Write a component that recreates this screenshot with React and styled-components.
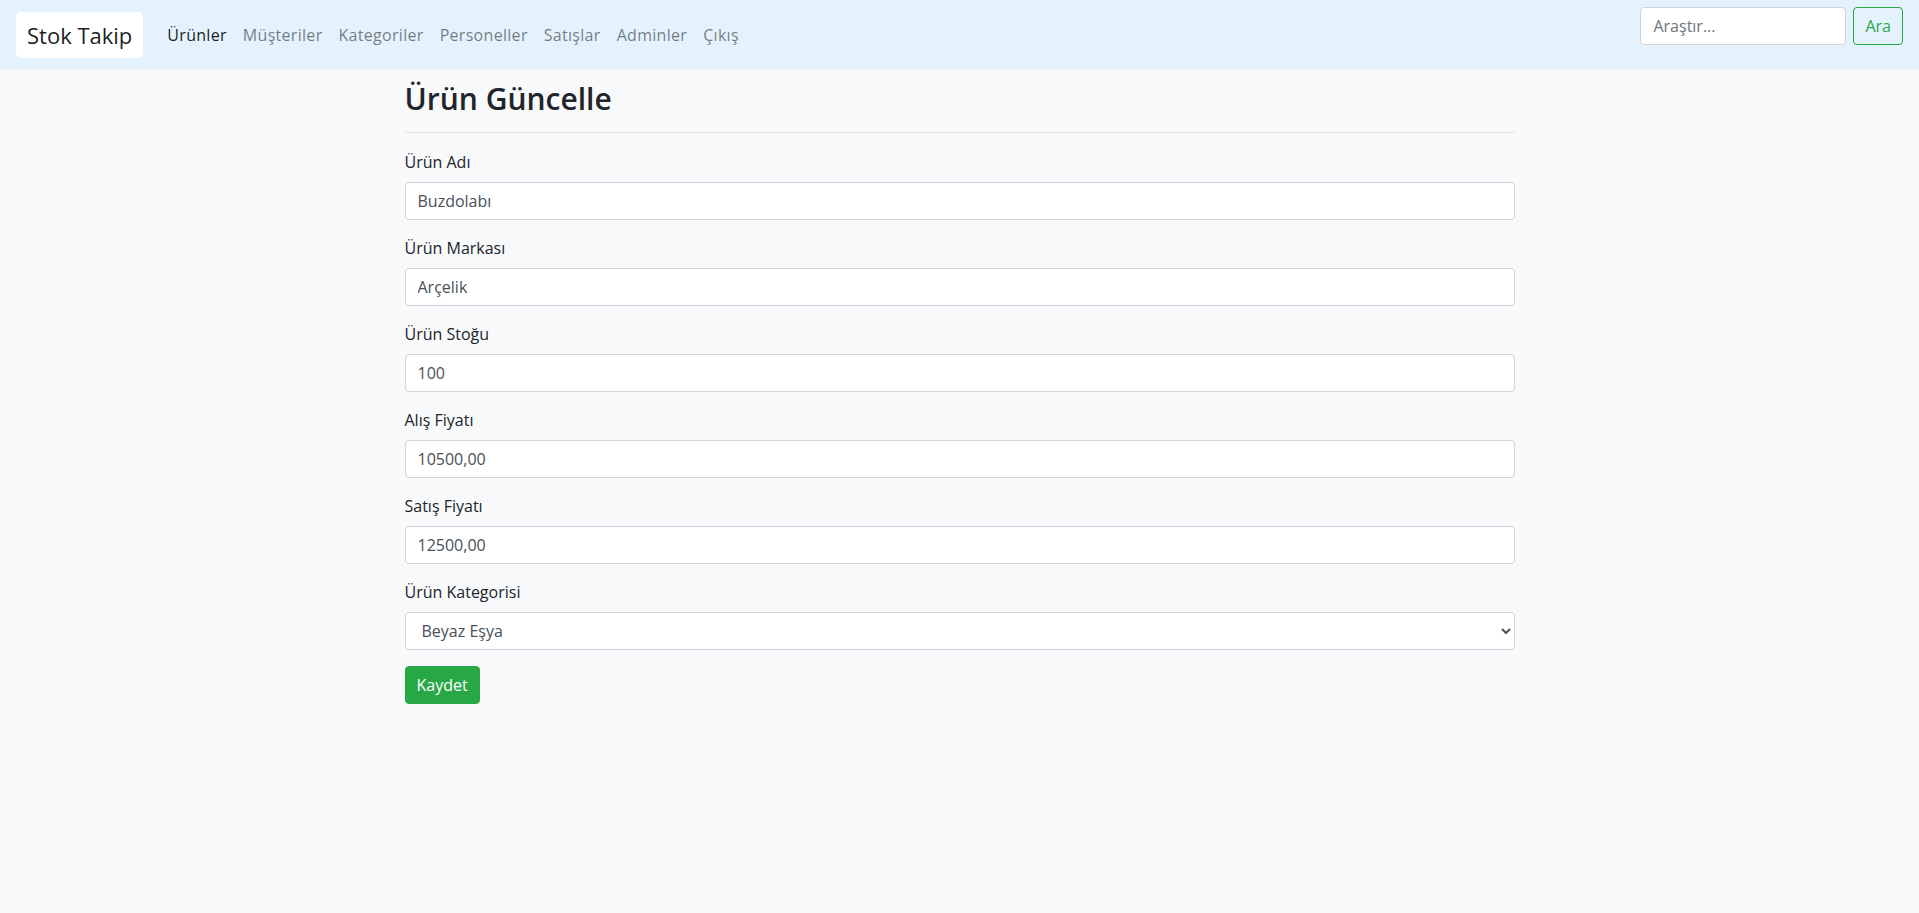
import styled, { createGlobalStyle } from "styled-components";

const GlobalStyle = createGlobalStyle`
  html, body {
    margin: 0;
    padding: 0;
    background: #f8f9fa;
    font-family: "Open Sans", "Noto Sans", "Liberation Sans", sans-serif;
    font-size: 16px;
    line-height: 1.5;
    color: #212529;
  }
  * {
    box-sizing: border-box;
  }
`;

const Page = styled.div`
  min-height: 913px;
  background: #f8f9fa;
`;

const Navbar = styled.nav`
  display: flex;
  align-items: center;
  height: 69px;
  padding: 0 16px;
  background-color: #e3f2fd;
`;

const Brand = styled.a`
  display: block;
  margin-right: 16px;
  padding: 6px 11px;
  font-size: 22px;
  line-height: 34px;
  color: rgba(0, 0, 0, 0.9);
  background: #fff;
  border-radius: 5px;
  text-decoration: none;
  white-space: nowrap;
`;

const NavList = styled.ul`
  display: flex;
  list-style: none;
  margin: 0;
  padding: 0;
  flex: 1;
`;

const NavLink = styled.a`
  display: block;
  padding: 8px;
  letter-spacing: 0.3px;
  color: ${(p) => (p.$active ? "rgba(0, 0, 0, 0.9)" : "rgba(0, 0, 0, 0.5)")};
  text-decoration: none;
  white-space: nowrap;
`;

const SearchForm = styled.form`
  display: flex;
  align-self: flex-start;
  margin-top: 7px;
`;

const SearchInput = styled.input`
  width: 206px;
  height: 38px;
  margin-right: 7px;
  padding: 6px 12px;
  font: inherit;
  color: #495057;
  background: #fff;
  border: 1px solid #ced4da;
  border-radius: 4px;
  outline: none;

  &::placeholder {
    color: #6c757d;
  }
`;

const OutlineButton = styled.button`
  height: 38px;
  padding: 6px 11px;
  font: inherit;
  color: #28a745;
  background: transparent;
  border: 1px solid #28a745;
  border-radius: 4px;
`;

const Container = styled.main`
  max-width: 1140px;
  margin: 0 auto;
  padding: 12px 15px 0;
`;

const Title = styled.h2`
  margin: 0;
  font-size: 30px;
  font-weight: 600;
  line-height: 36px;
  color: #212529;
`;

const Divider = styled.hr`
  margin: 15px 0 17px;
  border: 0;
  border-top: 1px solid rgba(0, 0, 0, 0.1);
`;

const FormGroup = styled.div`
  margin-bottom: 16px;
`;

const Label = styled.label`
  display: inline-block;
  margin-bottom: 8px;
`;

const Field = styled.input`
  display: block;
  width: 100%;
  height: 38px;
  padding: 6px 12px;
  font: inherit;
  color: #495057;
  background: #fff;
  border: 1px solid #ced4da;
  border-radius: 4px;
  outline: none;
`;

const SelectField = styled.select`
  display: block;
  width: 100%;
  height: 38px;
  padding: 6px 12px;
  font: inherit;
  color: #495057;
  background: #fff;
  border: 1px solid #ced4da;
  border-radius: 4px;
  outline: none;
`;

const SubmitButton = styled.button`
  height: 38px;
  padding: 6px 11px;
  font: inherit;
  color: #fff;
  background: #28a745;
  border: 1px solid #28a745;
  border-radius: 4px;
`;

const navItems = [
  "Ürünler",
  "Müşteriler",
  "Kategoriler",
  "Personeller",
  "Satışlar",
  "Adminler",
  "Çıkış",
];

const fields = [
  { id: "ad", label: "Ürün Adı", value: "Buzdolabı" },
  { id: "marka", label: "Ürün Markası", value: "Arçelik" },
  { id: "stok", label: "Ürün Stoğu", value: "100" },
  { id: "alis", label: "Alış Fiyatı", value: "10500,00" },
  { id: "satis", label: "Satış Fiyatı", value: "12500,00" },
];

const App = () => {
  return (
    <>
      <GlobalStyle />
      <Page>
        <Navbar>
          <Brand href="#">Stok Takip</Brand>
          <NavList>
            {navItems.map((item, i) => (
              <li key={item}>
                <NavLink href="#" $active={i === 0}>
                  {item}
                </NavLink>
              </li>
            ))}
          </NavList>
          <SearchForm onSubmit={(e) => e.preventDefault()}>
            <SearchInput type="search" placeholder="Araştır..." />
            <OutlineButton type="submit">Ara</OutlineButton>
          </SearchForm>
        </Navbar>

        <Container>
          <Title>Ürün Güncelle</Title>
          <Divider />
          <form onSubmit={(e) => e.preventDefault()}>
            {fields.map((f) => (
              <FormGroup key={f.id}>
                <Label htmlFor={f.id}>{f.label}</Label>
                <Field id={f.id} type="text" defaultValue={f.value} />
              </FormGroup>
            ))}
            <FormGroup>
              <Label htmlFor="kategori">Ürün Kategorisi</Label>
              <SelectField id="kategori" defaultValue="beyaz">
                <option value="beyaz">Beyaz Eşya</option>
                <option value="elektronik">Elektronik</option>
              </SelectField>
            </FormGroup>
            <SubmitButton type="submit">Kaydet</SubmitButton>
          </form>
        </Container>
      </Page>
    </>
  );
};

export default App;
